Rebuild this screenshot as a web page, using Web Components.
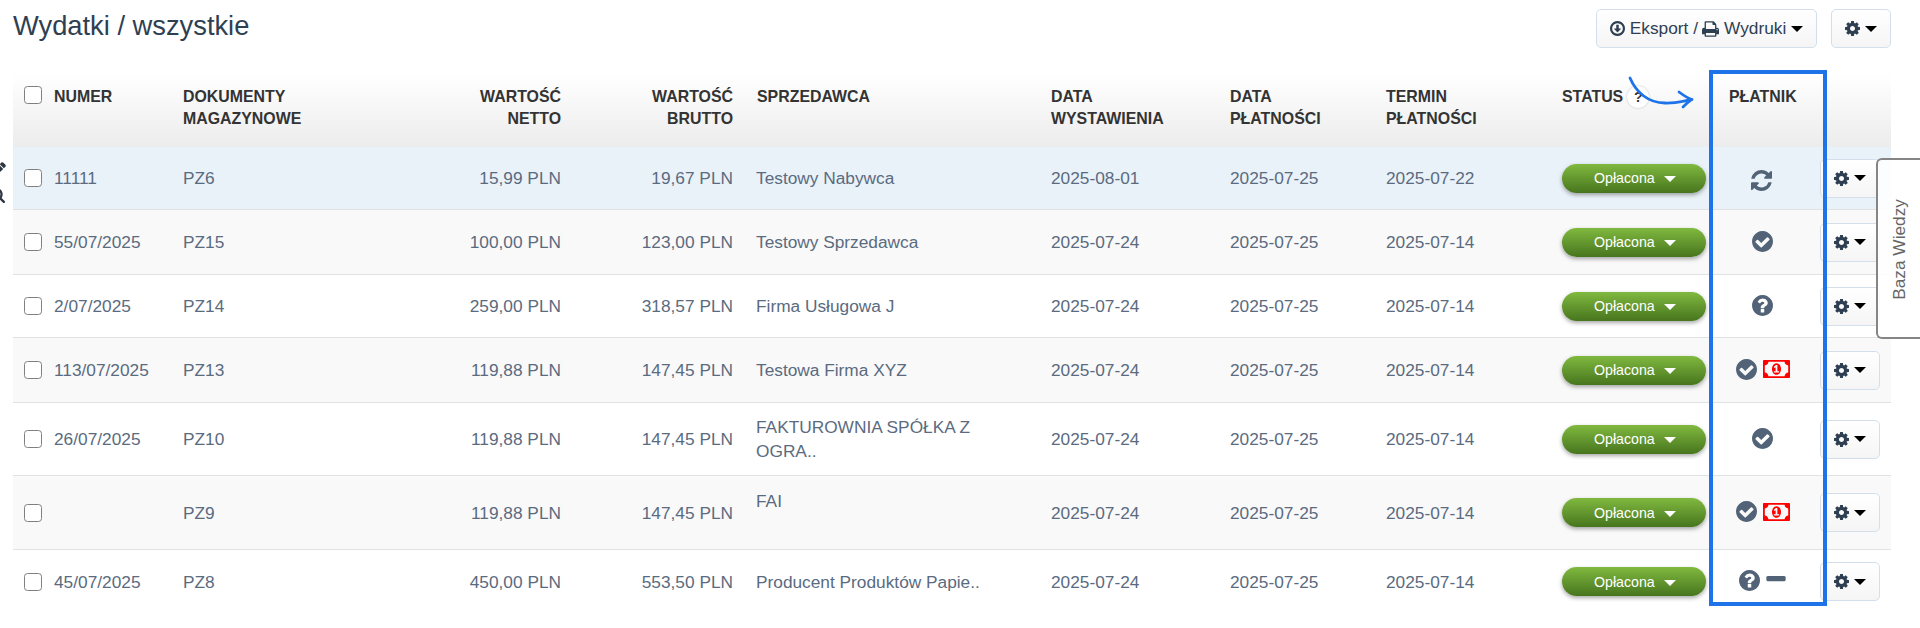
<!DOCTYPE html>
<html lang="pl">
<head>
<meta charset="utf-8">
<title>Wydatki / wszystkie</title>
<style>
    body {
        margin: 0;
        background: #fff;
        font-family: 'Liberation Sans', Arial, sans-serif;
        font-size: 17.3px;
        color: #5a6b80;
    }
</style>
</head>
<body>
<expense-page></expense-page>

<script>
(function () {
    'use strict';

    // 1792-unit glyph grid, y axis pointing up
    const GLYPHS = {
        gear: {
            box: '0 -1408 1536 1536',
            path: 'M1024 640q0 106 -75 181t-181 75t-181 -75t-75 -181t75 -181t181 -75t181 75t75 181zM1536 749v-222q0 -12 -8 -23t-20 -13l-185 -28q-19 -54 -39 -91q35 -50 107 -138q10 -12 10 -25t-9 -23q-27 -37 -99 -108t-94 -71q-12 0 -26 9l-138 108q-44 -23 -91 -38q-16 -136 -29 -186q-7 -28 -36 -28h-222q-14 0 -24.5 8.5t-11.5 21.5l-28 184q-49 16 -90 37l-141 -107q-10 -9 -25 -9q-14 0 -25 11q-126 114 -165 168q-7 10 -7 23q0 12 8 23q15 21 51 66.5t54 70.5q-27 50 -41 99l-183 27q-13 2 -21 12.5t-8 23.5v222q0 12 8 23t19 13l186 28q14 46 39 92q-40 57 -107 138q-10 12 -10 24q0 10 9 23q26 36 98.5 107.5t94.5 71.5q13 0 26 -10l138 -107q44 23 91 38q16 136 29 186q7 28 36 28h222q14 0 24.5 -8.5t11.5 -21.5l28 -184q49 -16 90 -37l142 107q9 9 24 9q13 0 25 -10q129 -119 165 -170q7 -8 7 -22q0 -12 -8 -23q-15 -21 -51 -66.5t-54 -70.5q26 -50 41 -98l183 -28q13 -2 21 -12.5t8 -23.5z'
        },
        check: {
            box: '0 -1408 1536 1536',
            path: 'M1284 802q0 28 -18 46l-91 90q-19 19 -45 19t-45 -19l-408 -407l-226 226q-19 19 -45 19t-45 -19l-91 -90q-18 -18 -18 -46q0 -27 18 -45l362 -362q19 -19 45 -19q27 0 46 19l543 543q18 18 18 45zM1536 640q0 -209 -103 -385.5t-279.5 -279.5t-385.5 -103t-385.5 103t-279.5 279.5t-103 385.5t103 385.5t279.5 279.5t385.5 103t385.5 -103t279.5 -279.5t103 -385.5z'
        },
        question: {
            box: '0 -1408 1536 1536',
            path: 'M896 160v192q0 14 -9 23t-23 9h-192q-14 0 -23 -9t-9 -23v-192q0 -14 9 -23t23 -9h192q14 0 23 9t9 23zM1152 832q0 88 -55.5 163t-138.5 116t-170 41q-243 0 -371 -213q-15 -24 8 -42l132 -100q7 -6 19 -6q16 0 25 12q53 68 86 92q34 24 86 24q48 0 85.5 -26t37.5 -59q0 -38 -20 -61t-68 -45q-63 -28 -115.5 -86.5t-52.5 -125.5v-36q0 -14 9 -23t23 -9h192q14 0 23 9t9 23q0 19 21.5 49.5t54.5 49.5q32 18 49 28.5t46 35t44.5 48t28 60.5t12.5 81zM1536 640q0 -209 -103 -385.5t-279.5 -279.5t-385.5 -103t-385.5 103t-279.5 279.5t-103 385.5t103 385.5t279.5 279.5t385.5 103t385.5 -103t279.5 -279.5t103 -385.5z'
        },
        refresh: {
            box: '0 -1408 1536 1536',
            path: 'M1511 480q0 -5 -1 -7q-64 -268 -268 -434.5t-478 -166.5q-146 0 -282.5 55t-243.5 157l-129 -129q-19 -19 -45 -19t-45 19t-19 45v448q0 26 19 45t45 19h448q26 0 45 -19t19 -45t-19 -45l-137 -137q71 -66 161 -102t187 -36q134 0 250 65t186 179q11 17 53 117q8 23 30 23h192q13 0 22.5 -9.5t9.5 -22.5zM1536 1280v-448q0 -26 -19 -45t-45 -19h-448q-26 0 -45 19t-19 45t19 45l138 138q-148 137 -349 137q-134 0 -250 -65t-186 -179q-11 -17 -53 -117q-8 -23 -30 -23h-199q-13 0 -22.5 9.5t-9.5 22.5v7q65 268 270 434.5t480 166.5q146 0 284 -55.5t245 -156.5l130 129q19 19 45 19t45 -19t19 -45z'
        },
        download: {
            box: '0 -1408 1536 1536',
            path: 'M1120 608q0 -12 -10 -24l-319 -319q-11 -9 -23 -9t-23 9l-320 320q-15 16 -7 35q8 20 30 20h192v352q0 14 9 23t23 9h192q14 0 23 -9t9 -23v-352h192q14 0 23 -9t9 -23zM768 1184q-148 0 -273 -73t-198 -198t-73 -273t73 -273t198 -198t273 -73t273 73t198 198t73 273t-73 273t-198 198t-273 73zM1536 640q0 -209 -103 -385.5t-279.5 -279.5t-385.5 -103t-385.5 103t-279.5 279.5t-103 385.5t103 385.5t279.5 279.5t385.5 103t385.5 -103t279.5 -279.5t103 -385.5z'
        },
        print: {
            box: '0 -1408 1664 1536',
            path: 'M384 0h896v256h-896v-256zM384 640h896v384h-160q-40 0 -68 28t-28 68v160h-640v-640zM1536 576q0 26 -19 45t-45 19t-45 -19t-19 -45t19 -45t45 -19t45 19t19 45zM1664 576v-416q0 -13 -9.5 -22.5t-22.5 -9.5h-224v-160q0 -40 -28 -68t-68 -28h-960q-40 0 -68 28t-28 68v160h-224q-13 0 -22.5 9.5t-9.5 22.5v416q0 79 56.5 135.5t135.5 56.5h64v544q0 40 28 68t68 28h672q40 0 88 -20t76 -48l152 -152q28 -28 48 -76t20 -88v-256h64q79 0 135.5 -56.5t56.5 -135.5z'
        },
        money: {
            box: '0 -1280 1920 1280',
            path: 'M768 384h384v96h-128v448h-114l-148 -137l77 -80q42 37 55 57h2v-288h-128v-96zM1280 640q0 -70 -21 -142t-59.5 -134t-101.5 -101t-138 -39t-138 39t-101.5 101t-59.5 134t-21 142t21 142t59.5 134t101.5 101t138 39t138 -39t101.5 -101t59.5 -134t21 -142zM1792 384v512q-106 0 -181 75t-75 181h-1152q0 -106 -75 -181t-181 -75v-512q106 0 181 -75t75 -181h1152q0 106 75 181t181 75zM1920 1216v-1152q0 -26 -19 -45t-45 -19h-1792q-26 0 -45 19t-19 45v1152q0 26 19 45t45 19h1792q26 0 45 -19t19 -45z'
        },
        minus: {
            box: '0 -1408 1408 1536',
            path: 'M1408 800v-192q0 -40 -28 -68t-68 -28h-1216q-40 0 -68 28t-28 68v192q0 40 28 68t68 28h1216q40 0 68 -28t28 -68z'
        },
        pencil: {
            box: '0 -1408 1536 1536',
            path: 'M363 0l91 91l-235 235l-91 -91v-107h128v-128h107zM886 928q0 22 -22 22q-10 0 -17 -7l-542 -542q-7 -7 -7 -17q0 -22 22 -22q10 0 17 7l542 542q7 7 7 17zM832 1120l416 -416l-832 -832h-416v416zM1515 1024q0 -53 -37 -90l-166 -166l-416 416l166 165q36 38 90 38q53 0 91 -38l235 -234q37 -39 37 -91z'
        },
        search: {
            box: '0 -1408 1664 1664',
            path: 'M1152 704q0 185 -131.5 316.5t-316.5 131.5t-316.5 -131.5t-131.5 -316.5t131.5 -316.5t316.5 -131.5t316.5 131.5t131.5 316.5zM1664 -128q0 -52 -38 -90t-90 -38q-54 0 -90 38l-343 342q-179 -124 -399 -124q-143 0 -273.5 55.5t-225 150t-150 225t-55.5 273.5t55.5 273.5t150 225t225 150t273.5 55.5t273.5 -55.5t225 -150t150 -225t55.5 -273.5q0 -220 -124 -399l343 -343q37 -37 37 -90z'
        }
    };

    const EXPENSES = [
        { number: '11111', doc: 'PZ6', net: '15,99 PLN', gross: '19,67 PLN', seller: 'Testowy Nabywca', issued: '2025-08-01', paid: '2025-07-25', due: '2025-07-22', payer: ['refresh'], height: 63, active: true },
        { number: '55/07/2025', doc: 'PZ15', net: '100,00 PLN', gross: '123,00 PLN', seller: 'Testowy Sprzedawca', issued: '2025-07-24', paid: '2025-07-25', due: '2025-07-14', payer: ['check'], height: 65 },
        { number: '2/07/2025', doc: 'PZ14', net: '259,00 PLN', gross: '318,57 PLN', seller: 'Firma Usługowa J', issued: '2025-07-24', paid: '2025-07-25', due: '2025-07-14', payer: ['question'], height: 63 },
        { number: '113/07/2025', doc: 'PZ13', net: '119,88 PLN', gross: '147,45 PLN', seller: 'Testowa Firma XYZ', issued: '2025-07-24', paid: '2025-07-25', due: '2025-07-14', payer: ['check', 'money'], height: 65 },
        { number: '26/07/2025', doc: 'PZ10', net: '119,88 PLN', gross: '147,45 PLN', seller: 'FAKTUROWNIA SPÓŁKA Z<br>OGRA..', issued: '2025-07-24', paid: '2025-07-25', due: '2025-07-14', payer: ['check'], height: 73 },
        { number: '', doc: 'PZ9', net: '119,88 PLN', gross: '147,45 PLN', seller: 'FAI<br>&nbsp;', issued: '2025-07-24', paid: '2025-07-25', due: '2025-07-14', payer: ['check', 'money'], height: 74 },
        { number: '45/07/2025', doc: 'PZ8', net: '450,00 PLN', gross: '553,50 PLN', seller: 'Producent Produktów Papie..', issued: '2025-07-24', paid: '2025-07-25', due: '2025-07-14', payer: ['question', 'minus'], height: 64 }
    ];

    const COLUMNS = '41px 129px 231px 147px 172px 318px 179px 156px 176px 167px 1fr';

    class UiIcon extends HTMLElement {
        connectedCallback() {
            const glyph = GLYPHS[this.getAttribute('name')];
            this.attachShadow({ mode: 'open' }).innerHTML = `
                <style>
                    :host {
                        display: inline-block;
                        flex: none;
                        width: 15px;
                        height: 15px;
                    }

                    svg {
                        display: block;
                        width: 100%;
                        height: 100%;
                        fill: currentColor;
                    }
                </style>
                <svg viewBox="${glyph.box}" aria-hidden="true">
                    <path transform="scale(1 -1)" d="${glyph.path}"/>
                </svg>
            `;
        }
    }

    class MenuButton extends HTMLElement {
        connectedCallback() {
            this.attachShadow({ mode: 'open' }).innerHTML = `
                <style>
                    :host {
                        display: flex;
                        align-items: center;
                        justify-content: center;
                        gap: 5px;
                        flex: none;
                        box-sizing: border-box;
                        width: 60px;
                        height: 39px;
                        border: 1px solid #d3e0eb;
                        border-radius: 5px;
                        background: linear-gradient(#ffffff, #f5f5f5);
                        color: #2f3f52;
                        white-space: nowrap;
                    }

                    .caret {
                        border: 6px solid transparent;
                        border-top: 6px solid #000;
                        border-bottom: 0;
                    }
                </style>
                <slot></slot>
                <span class="caret"></span>
            `;
        }
    }

    class StatusPill extends HTMLElement {
        connectedCallback() {
            this.attachShadow({ mode: 'open' }).innerHTML = `
                <style>
                    :host {
                        display: flex;
                        align-items: center;
                        gap: 9px;
                        box-sizing: border-box;
                        width: 144px;
                        height: 29px;
                        padding-left: 32px;
                        border-radius: 15px;
                        background: linear-gradient(#80b93f, #47751e);
                        box-shadow: 0 2px 4px rgba(0, 0, 0, 0.35);
                        color: #fff;
                        font-size: 14.2px;
                    }

                    .caret {
                        margin-top: 2px;
                        border: 6px solid transparent;
                        border-top: 6px solid #fff;
                        border-bottom: 0;
                    }
                </style>
                <slot></slot>
                <span class="caret"></span>
            `;
        }
    }

    class CheckBox extends HTMLElement {
        connectedCallback() {
            this.attachShadow({ mode: 'open' }).innerHTML = `
                <style>
                    :host {
                        display: block;
                        box-sizing: border-box;
                        width: 18px;
                        height: 18px;
                        border: 1.5px solid #808080;
                        border-radius: 3.5px;
                        background: #fff;
                    }
                </style>
            `;
        }
    }

    class TableHead extends HTMLElement {
        connectedCallback() {
            this.attachShadow({ mode: 'open' }).innerHTML = `
                <style>
                    :host {
                        display: grid;
                        grid-template-columns: ${COLUMNS};
                        box-sizing: border-box;
                        height: 77px;
                        padding-top: 16px;
                        background: linear-gradient(#ffffff 5%, #ececec);
                        color: #333;
                        font-size: 15.9px;
                        font-weight: bold;
                        line-height: 22px;
                        text-transform: uppercase;
                    }

                    check-box {
                        margin: 0 0 0 11px;
                    }

                    .right {
                        text-align: right;
                    }

                    .seller {
                        padding-left: 24px;
                    }

                    .status {
                        display: flex;
                        align-items: flex-start;
                    }

                    .help {
                        width: 22px;
                        height: 22px;
                        margin-left: 4px;
                        border-radius: 50%;
                        background: #fff;
                        box-shadow: 0 0 2px rgba(0, 0, 0, 0.25);
                        font-size: 14px;
                        text-align: center;
                    }
                </style>
                <check-box></check-box>
                <span>Numer</span>
                <span>Dokumenty<br>magazynowe</span>
                <span class="right">Wartość<br>netto</span>
                <span class="right">Wartość<br>brutto</span>
                <span class="seller">Sprzedawca</span>
                <span>Data<br>wystawienia</span>
                <span>Data<br>płatności</span>
                <span>Termin<br>płatności</span>
                <span class="status">Status<span class="help">?</span></span>
                <span>Płatnik</span>
            `;
        }
    }

    class ExpenseRow extends HTMLElement {
        set expense(data) {
            const icons = data.payer.map((name) => `<ui-icon class="${name}" name="${name}"></ui-icon>`).join('');

            this.attachShadow({ mode: 'open' }).innerHTML = `
                <style>
                    :host {
                        display: grid;
                        grid-template-columns: ${COLUMNS};
                        align-items: center;
                        box-sizing: border-box;
                        height: ${data.height}px;
                        border-bottom: 1px solid #e0e2e4;
                        line-height: 24px;
                    }

                    :host(:nth-of-type(even)) {
                        background: #f9f9f9;
                    }

                    :host([active]) {
                        background: #eaf2f9;
                    }

                    :host(:last-of-type) {
                        border-bottom-color: transparent;
                    }

                    check-box {
                        margin-left: 11px;
                    }

                    .right {
                        text-align: right;
                    }

                    .seller {
                        padding-left: 23px;
                    }

                    .end {
                        display: flex;
                        align-items: center;
                    }

                    .payer {
                        display: flex;
                        align-items: center;
                        justify-content: center;
                        gap: 6px;
                        width: 67px;
                        margin-right: 24px;
                        color: #526377;
                    }

                    .payer ui-icon {
                        width: 21px;
                        height: 21px;
                        margin-bottom: 2px;
                    }

                    .payer .refresh {
                        margin: 4px 2px 0 0;
                    }

                    .payer .money {
                        width: 27px;
                        height: 18px;
                        color: #fe0000;
                    }

                    .payer .minus {
                        width: 20px;
                        margin-bottom: 4px;
                    }
                </style>
                <check-box></check-box>
                <span>${data.number}</span>
                <span>${data.doc}</span>
                <span class="right">${data.net}</span>
                <span class="right">${data.gross}</span>
                <span class="seller">${data.seller}</span>
                <span>${data.issued}</span>
                <span>${data.paid}</span>
                <span>${data.due}</span>
                <status-pill>Opłacona</status-pill>
                <div class="end">
                    <div class="payer">${icons}</div>
                    <menu-button><ui-icon name="gear"></ui-icon></menu-button>
                </div>
            `;
            this.toggleAttribute('active', Boolean(data.active));
        }
    }

    class KnowledgeTab extends HTMLElement {
        connectedCallback() {
            this.attachShadow({ mode: 'open' }).innerHTML = `
                <style>
                    :host {
                        display: flex;
                        align-items: center;
                        justify-content: center;
                        box-sizing: border-box;
                        padding-top: 2px;
                        border: 2px solid #858585;
                        border-right: 0;
                        border-radius: 6px 0 0 6px;
                        background: rgba(255, 255, 255, 0.85);
                        color: #666;
                    }

                    span {
                        writing-mode: vertical-rl;
                        transform: rotate(180deg);
                    }
                </style>
                <span><slot></slot></span>
            `;
        }
    }

    class ExpensePage extends HTMLElement {
        connectedCallback() {
            this.attachShadow({ mode: 'open' }).innerHTML = `
                <style>
                    :host {
                        display: block;
                        position: relative;
                        box-sizing: border-box;
                        height: 628px;
                        padding: 0 29px 0 13px;
                        overflow: hidden;
                    }

                    header {
                        display: flex;
                        align-items: flex-start;
                        gap: 14px;
                        height: 70px;
                    }

                    h1 {
                        flex: 1;
                        margin: 10px 0 0;
                        color: #2f3f52;
                        font-size: 27.3px;
                        font-weight: normal;
                        line-height: 32px;
                    }

                    header menu-button {
                        margin-top: 9px;
                    }

                    header .export {
                        width: 221px;
                        gap: 4.5px;
                    }

                    .print {
                        width: 17px;
                        height: 16px;
                    }

                    .side {
                        position: absolute;
                        left: -9px;
                        top: 162px;
                        display: flex;
                        flex-direction: column;
                        gap: 11px;
                        color: #2c3540;
                    }

                    .side [name="search"] {
                        margin-left: -1px;
                    }

                    .frame {
                        position: absolute;
                        left: 1709px;
                        top: 70px;
                        box-sizing: border-box;
                        width: 118px;
                        height: 536px;
                        border: 4px solid #1f73e8;
                    }

                    .arrow {
                        position: absolute;
                        left: 1620px;
                        top: 70px;
                        fill: none;
                        stroke: #1f73e8;
                        stroke-width: 2.8;
                        stroke-linecap: round;
                        stroke-linejoin: round;
                    }

                    knowledge-tab {
                        position: absolute;
                        left: 1876px;
                        top: 158px;
                        width: 44px;
                        height: 181px;
                    }
                </style>
                <header>
                    <h1>Wydatki / wszystkie</h1>
                    <menu-button class="export">
                        <ui-icon name="download"></ui-icon>
                        <span>Eksport /</span>
                        <ui-icon class="print" name="print"></ui-icon>
                        <span>Wydruki</span>
                    </menu-button>
                    <menu-button><ui-icon name="gear"></ui-icon></menu-button>
                </header>
                <table-head></table-head>
                <main></main>
                <div class="side">
                    <ui-icon name="pencil"></ui-icon>
                    <ui-icon name="search"></ui-icon>
                </div>
                <div class="frame"></div>
                <svg class="arrow" width="80" height="45" viewBox="0 0 80 45" aria-hidden="true">
                    <path d="M10 8C16 22 28 33 45 33C55 33.500 63 31 72 29.500M59 22C63 25 67 28 72 29.500C69 31 66 34 63 37"/>
                </svg>
                <knowledge-tab>Baza Wiedzy</knowledge-tab>
            `;

            const main = this.shadowRoot.querySelector('main');
            EXPENSES.forEach((expense) => {
                const row = document.createElement('expense-row');
                row.expense = expense;
                main.append(row);
            });
        }
    }

    customElements.define('ui-icon', UiIcon);
    customElements.define('menu-button', MenuButton);
    customElements.define('status-pill', StatusPill);
    customElements.define('check-box', CheckBox);
    customElements.define('table-head', TableHead);
    customElements.define('expense-row', ExpenseRow);
    customElements.define('knowledge-tab', KnowledgeTab);
    customElements.define('expense-page', ExpensePage);
})();
</script>
</body>
</html>
